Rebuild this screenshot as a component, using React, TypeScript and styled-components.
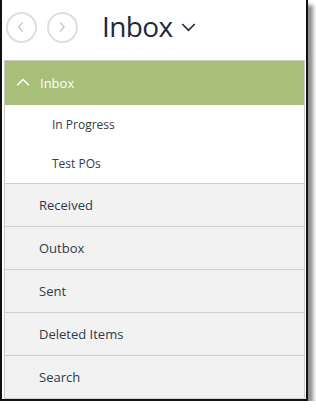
import React from "react";
import styled, { createGlobalStyle } from "styled-components";

const GlobalStyle = createGlobalStyle`
  body {
    margin: 0;
    background: #ffffff;
    font-family: "Open Sans", "Liberation Sans", sans-serif;
  }
`;

const Frame = styled.div`
  width: 304px;
  height: 399px;
  border-left: 2px solid #111;
  border-right: 2px solid #111;
  border-bottom: 2px solid #111;
  background: #fff;
  box-shadow: 5px 5px 4px rgba(0, 0, 0, 0.45);
  display: flex;
  flex-direction: column;
`;

const Header = styled.div`
  height: 60px;
  display: flex;
  align-items: center;
  padding-left: 4px;
  gap: 10px;
`;

const NavButton = styled.button`
  width: 31px;
  height: 31px;
  border-radius: 50%;
  border: 2px solid #dedede;
  background: #fff;
  padding: 0;
  display: flex;
  align-items: center;
  justify-content: center;
  margin-top: -6px;
`;

const Title = styled.div`
  display: flex;
  align-items: center;
  gap: 8px;
  margin-left: 14px;
  margin-top: -8px;
  font-size: 28px;
  color: #1c2a3c;
  letter-spacing: -0.6px;
`;

const Panel = styled.div`
  margin: 0 1px 0 2px;
  border: 1px solid #c9c9c9;
  border-bottom: none;
  flex: 1;
  display: flex;
  flex-direction: column;
`;

const GroupHead = styled.div`
  height: 44px;
  background: #a8bf7a;
  display: flex;
  align-items: center;
  padding-left: 11px;
  gap: 10px;
  color: #fff;
  font-size: 13px;
`;

const SubList = styled.div`
  background: #fff;
  border-bottom: 1px solid #cfcfcf;
`;

const SubItem = styled.div`
  height: 39px;
  display: flex;
  align-items: center;
  padding-left: 47px;
  font-size: 12px;
  color: #2f3b4a;
`;

const Item = styled.div`
  height: 42px;
  background: #f2f2f2;
  border-bottom: 1px solid #cfcfcf;
  display: flex;
  align-items: center;
  padding-left: 34px;
  font-size: 13px;
  color: #2f3b4a;
`;

const Chevron = ({ dir, color, size }: { dir: "left" | "right" | "up" | "down"; color: string; size: number }) => {
  const paths: Record<string, string> = {
    left: "M6.5 2 L3 6 L6.5 10",
    right: "M3.5 2 L7 6 L3.5 10",
    up: "M1 8 L6 3 L11 8",
    down: "M1 4 L6 9 L11 4",
  };
  return (
    <svg width={size} height={size} viewBox="0 0 12 12">
      <path d={paths[dir]} fill="none" stroke={color} strokeWidth={dir === "left" || dir === "right" ? 1.1 : 1.3} />
    </svg>
  );
};

const subItems = ["In Progress", "Test POs"];
const items = ["Received", "Outbox", "Sent", "Deleted Items", "Search"];

export default function App() {
  return (
    <>
      <GlobalStyle />
      <Frame>
        <Header>
          <NavButton>
            <Chevron dir="left" color="#c4c4c4" size={14} />
          </NavButton>
          <NavButton>
            <Chevron dir="right" color="#c4c4c4" size={14} />
          </NavButton>
          <Title>
            Inbox
            <Chevron dir="down" color="#1c2a3c" size={15} />
          </Title>
        </Header>
        <Panel>
          <GroupHead>
            <Chevron dir="up" color="#fff" size={14} />
            Inbox
          </GroupHead>
          <SubList>
            {subItems.map((s) => (
              <SubItem key={s}>{s}</SubItem>
            ))}
          </SubList>
          {items.map((s) => (
            <Item key={s}>{s}</Item>
          ))}
        </Panel>
      </Frame>
    </>
  );
}
